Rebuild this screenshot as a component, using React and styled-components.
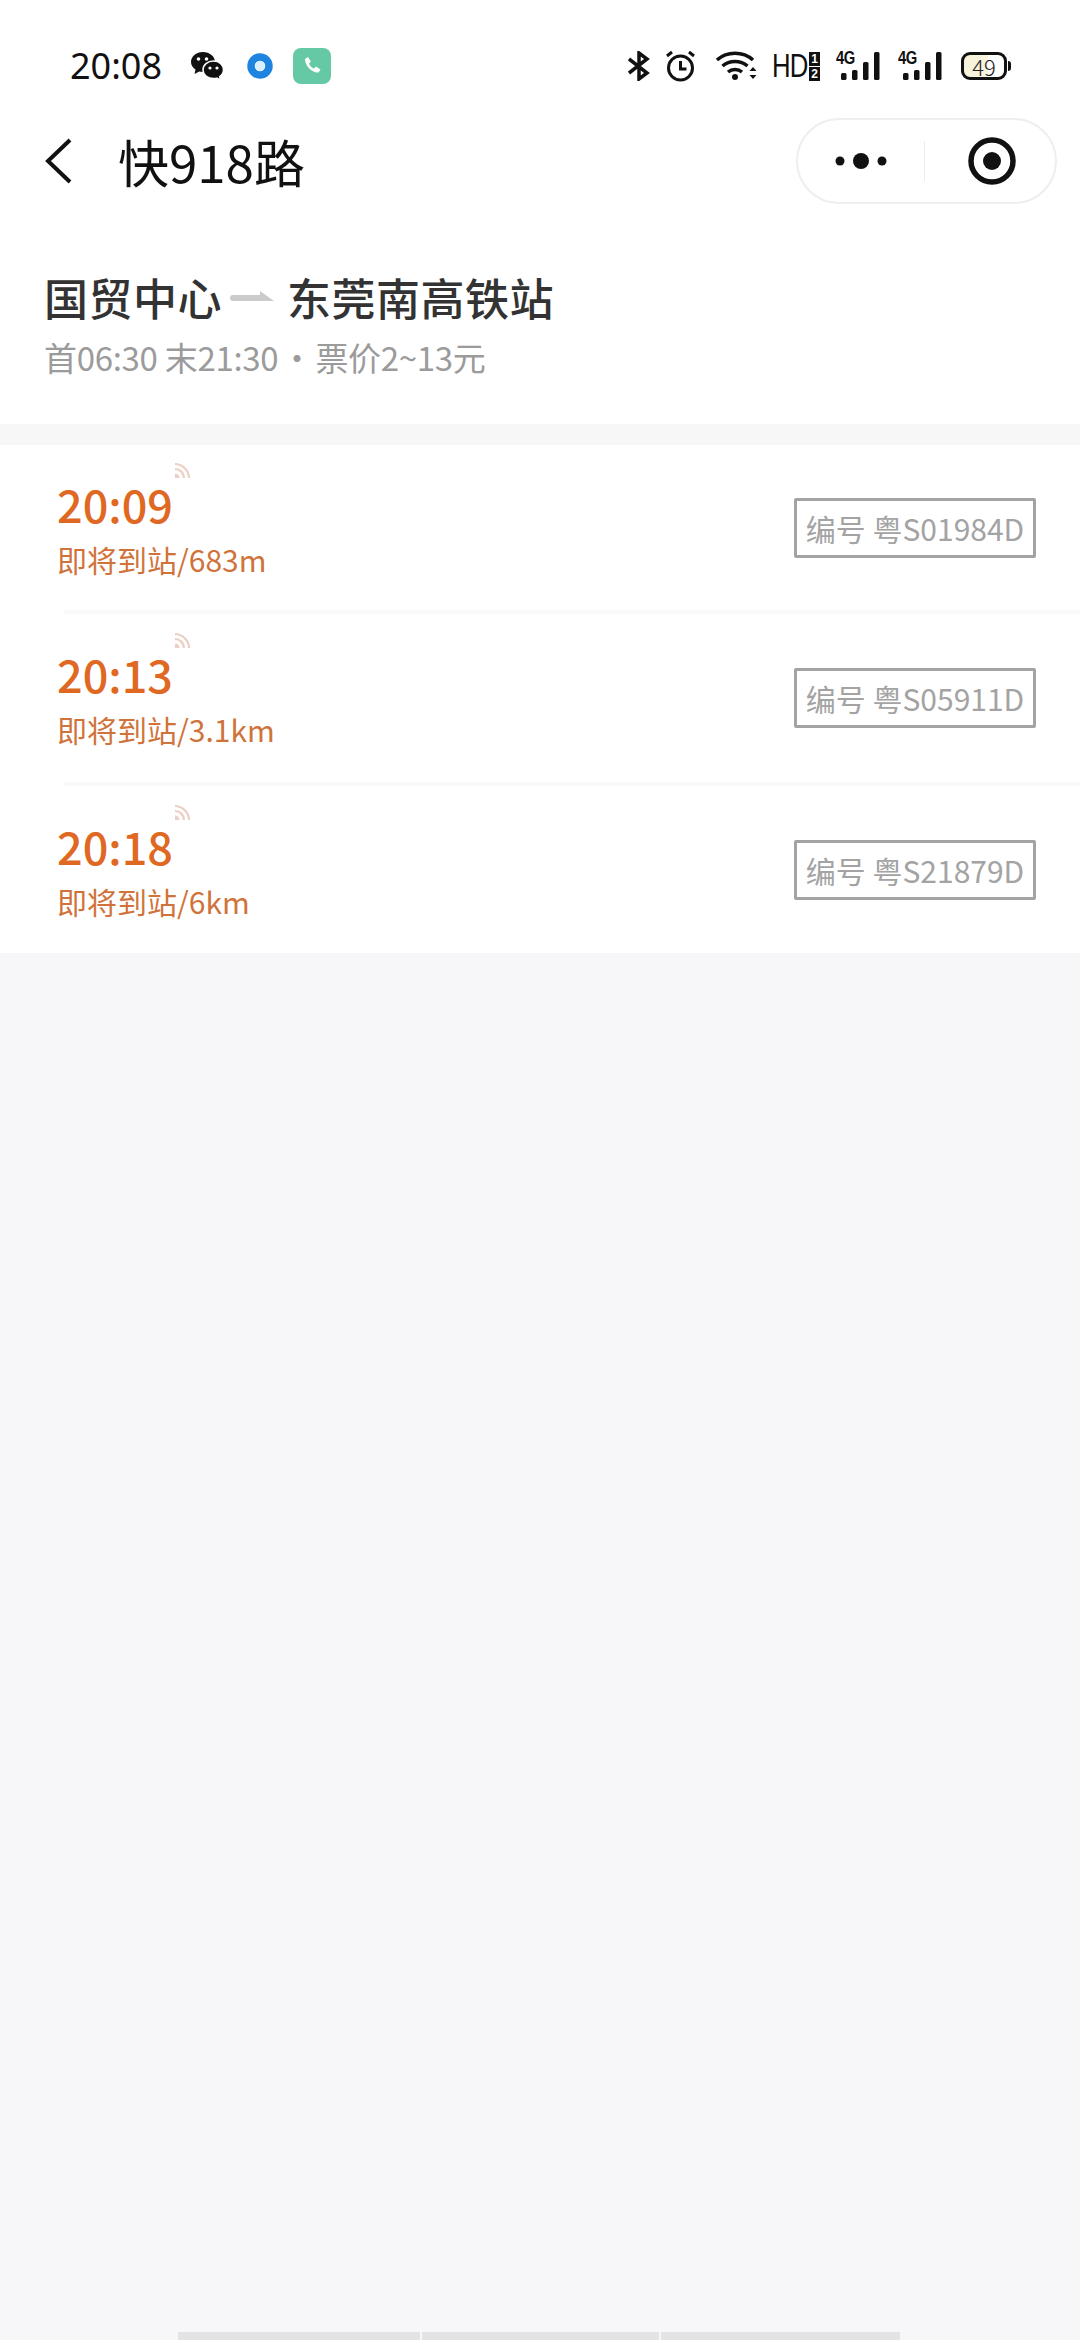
import React from 'react';
import styled, { createGlobalStyle } from 'styled-components';

const cjk = `"Noto Sans CJK SC", "Noto Sans", sans-serif`;

const GlobalStyle = createGlobalStyle`
	html, body {
		margin: 0;
		padding: 0;
		background: #f7f7f9;
		font-family: ${cjk};
	}
`;

const Page = styled.div`
	width: 1080px;
	height: 2340px;
	display: flex;
	flex-direction: column;
	overflow: hidden;
	background: #f7f7f9;
`;

const Top = styled.div`
	background: #fff;
`;

const StatusBar = styled.div`
	display: flex;
	align-items: center;
	justify-content: space-between;
	height: 36px;
	padding: 48px 69px 0 70px;
`;

const StatusGroup = styled.div`
	display: flex;
	align-items: center;
`;

const Clock = styled.span`
	font-family: "Noto Sans", sans-serif;
	font-size: 36px;
	line-height: 36px;
	color: #111;
	margin-right: 28px;
`;

const Glyph = styled.svg`
	display: block;
	flex: none;
	margin-left: ${props => props.$gap || 0}px;
`;

const HdText = styled.span`
	display: block;
	width: 37px;
	margin-left: 15px;
	font-family: "Liberation Sans", sans-serif;
	font-size: 33px;
	line-height: 36px;
	letter-spacing: -1px;
	white-space: nowrap;
	color: #111;
	transform: scaleX(0.78);
	transform-origin: left center;
`;

const SimStack = styled.div`
	display: flex;
	flex-direction: column;
	gap: 1px;
`;

const SimCell = styled.span`
	width: 11px;
	height: 14px;
	background: #111;
	color: #fff;
	font: 700 12px/14px "Liberation Sans", sans-serif;
	text-align: center;
`;

const Signal = styled.div`
	position: relative;
	width: 44px;
	height: 28px;
	margin-left: ${props => props.$gap}px;
`;

const SignalLabel = styled.span`
	position: absolute;
	left: 0;
	top: -3px;
	font: 700 18px/18px "Liberation Sans", sans-serif;
	letter-spacing: -0.5px;
	color: #111;
	transform: scaleX(0.82);
	transform-origin: left center;
`;

const Battery = styled.div`
	position: relative;
	box-sizing: border-box;
	width: 46px;
	height: 28px;
	margin: 0 4px 0 19px;
	border: 3px solid #111;
	border-radius: 9px;
	background: linear-gradient(90deg, #f8f3dc 0 58%, #fff 62%);
	color: #222;
	font-size: 22px;
	font-weight: 300;
	line-height: 22px;
	text-align: center;
	&::after {
		content: "";
		position: absolute;
		right: -7px;
		top: 6px;
		width: 3px;
		height: 10px;
		background: #111;
		border-radius: 0 3px 3px 0;
	}
`;

const NavBar = styled.div`
	display: flex;
	align-items: center;
	height: 86px;
	padding: 34px 23px 0 45px;
`;

const NavTitle = styled.h1`
	margin: 0 0 0 46px;
	flex: 1;
	font-size: 51px;
	font-weight: 400;
	line-height: 58px;
	color: #111;
`;

const Capsule = styled.div`
	display: flex;
	align-items: center;
	box-sizing: border-box;
	width: 261px;
	height: 86px;
	border: 2px solid #eee;
	border-radius: 43px;
`;

const CapsuleSide = styled.div`
	flex: 1;
	display: flex;
	align-items: center;
	justify-content: center;
	padding-left: ${props => props.$nudge || 0}px;
`;

const CapsuleLine = styled.div`
	width: 1px;
	height: 40px;
	background: #ececec;
`;

const RouteBlock = styled.div`
	padding: 62px 45px 44px 44px;
`;

const RouteLine = styled.div`
	display: flex;
	align-items: center;
	height: 62px;
	font-size: 44px;
	font-weight: 500;
	line-height: 62px;
	letter-spacing: 0.5px;
	color: #333;
`;

const RouteArrow = styled.svg`
	display: block;
	margin: 0 13px 0 8px;
	flex: none;
`;

const RouteMeta = styled.div`
	margin-top: 6px;
	font-size: 33px;
	line-height: 46px;
	letter-spacing: -0.3px;
	color: #9b9b9b;
`;

const MetaDot = styled.span`
	display: inline-block;
	width: 37px;
	text-align: center;
`;

const Band = styled.div`
	height: 21px;
	background: #f7f7f7;
`;

const List = styled.div`
	background: #fff;
`;

const Row = styled.div`
	display: flex;
	align-items: center;
	justify-content: space-between;
	box-sizing: border-box;
	height: ${props => props.$height}px;
	padding: 0 44px 0 57px;
`;

const RowText = styled.div`
	display: flex;
	flex-direction: column;
`;

const TimeWrap = styled.div`
	position: relative;
	align-self: flex-start;
	font-size: 45px;
	font-weight: 500;
	line-height: 56px;
	color: #df6823;
`;

const Live = styled.svg`
	position: absolute;
	left: 117px;
	top: -14px;
	display: block;
`;

const Eta = styled.div`
	margin-top: 6px;
	font-size: 30px;
	line-height: 42px;
	color: #d0733b;
`;

const Plate = styled.div`
	box-sizing: border-box;
	display: flex;
	align-items: center;
	justify-content: center;
	width: 242px;
	height: 60px;
	border: 3px solid #a3a3a3;
	border-radius: 2px;
	font-size: 30px;
	color: #a3a3a3;
	white-space: nowrap;
`;

const Divider = styled.div`
	height: 4px;
	margin-left: 64px;
	background: #f9f9fa;
`;

const HomeHint = styled.div`
	display: flex;
	gap: 2px;
	margin: auto 180px 0 178px;
	height: 8px;
`;

const HintPart = styled.div`
	flex: ${props => props.$grow};
	background: #e3e3e5;
`;

const WeChat = () => (
	<Glyph width="35" height="30" viewBox="0 0 35 30">
		<path d="M13 1C6 1 1 5.600 1 11c0 3.200 1.800 5.800 4.500 7.600L4.600 23l4.600-2.600c1.300.3 2.500.5 3.800.5 6.500 0 12-4.400 12-10C25 5.400 19.500 1 13 1z" fill="#111" />
		<path d="M23.500 10C17.500 10 13 14 13 18.800s4.500 8.800 10.500 8.800c1.200 0 2.300-.2 3.400-.5l3.600 2-.8-3.500c2.400-1.600 3.800-4 3.800-6.800C33.500 14 29.500 10 23.500 10z" fill="#111" stroke="#fff" strokeWidth="1.500" />
		<circle cx="8.500" cy="8" r="1.800" fill="#fff" />
		<circle cx="16.500" cy="8" r="1.800" fill="#fff" />
		<circle cx="20" cy="17" r="1.600" fill="#fff" />
		<circle cx="27" cy="17" r="1.600" fill="#fff" />
	</Glyph>
);

const BlueDot = () => (
	<Glyph $gap={22} width="26" height="26" viewBox="0 0 26 26">
		<circle cx="13" cy="13" r="9" fill="none" stroke="#1f84e0" strokeWidth="7.500" />
		<circle cx="13" cy="13" r="5" fill="#d8f0fb" />
	</Glyph>
);

const PhoneTile = () => (
	<Glyph $gap={20} width="38" height="36" viewBox="0 0 38 36">
		<rect width="38" height="36" rx="8" fill="#66c9a6" />
		<path d="M12 11l3-2 3 4.500-2 2c1 2.500 2.500 4 5 5l2-2 4.500 3-2 3c-6.500.5-13.500-6.500-13.500-13.500z" fill="#fff" />
	</Glyph>
);

const Bluetooth = () => (
	<Glyph width="22" height="30" viewBox="0 0 22 30" fill="none" stroke="#111" strokeWidth="3.500">
		<path d="M1 8l18 14-8 6V2l8 6L1 22" />
	</Glyph>
);

const Alarm = () => (
	<Glyph $gap={15} width="31" height="32" viewBox="0 0 31 32" fill="none" stroke="#111" strokeWidth="3">
		<circle cx="15.500" cy="18" r="12" />
		<path d="M15.500 11v8h6M2 6l5-4M29 6l-5-4" />
	</Glyph>
);

const Wifi = () => (
	<Glyph $gap={20} width="41" height="32" viewBox="0 0 41 32" fill="none" stroke="#111" strokeWidth="3.500">
		<path d="M1 10c10-9 26-9 36 0M6.500 16c7-6 18-6 25 0M12 22c4-3.500 10-3.500 14 0" />
		<circle cx="19" cy="27" r="3" fill="#111" stroke="none" />
		<path d="M33.500 21l3.500-4 3.500 4zM33.500 25l3.500 4 3.500-4z" fill="#111" stroke="none" />
	</Glyph>
);

const SignalBars = () => (
	<Glyph width="44" height="28" viewBox="0 0 44 28" fill="#111">
		<rect x="5" y="21" width="5.500" height="7" rx="1.500" />
		<rect x="16" y="18" width="5.500" height="10" rx="1.500" />
		<rect x="27" y="10" width="5.500" height="18" rx="1.500" />
		<rect x="38" y="0" width="5.500" height="28" rx="1.500" />
	</Glyph>
);

const SignalIcon = ({ gap }) => (
	<Signal $gap={gap}>
		<SignalBars />
		<SignalLabel>4G</SignalLabel>
	</Signal>
);

const LiveWaves = () => (
	<Live width="17" height="17" viewBox="0 0 17 17" fill="none" stroke="#eccfc2" strokeWidth="2.200">
		<path d="M1 2c7.500 0 14 6.500 14 14M1 7c5 0 9 4 9 9" />
		<path d="M1 11.500c2.500 0 4.500 2 4.500 4.500H1z" fill="#eccfc2" stroke="none" />
	</Live>
);

const arrivals = [
	{ time: '20:09', eta: '即将到站/683m', plate: '粤S01984D', height: 165 },
	{ time: '20:13', eta: '即将到站/3.1km', plate: '粤S05911D', height: 168 },
	{ time: '20:18', eta: '即将到站/6km', plate: '粤S21879D', height: 167 },
];

const App = () => (
	<Page>
		<GlobalStyle />
		<Top>
			<StatusBar>
				<StatusGroup>
					<Clock>20:08</Clock>
					<WeChat />
					<BlueDot />
					<PhoneTile />
				</StatusGroup>
				<StatusGroup>
					<Bluetooth />
					<Alarm />
					<Wifi />
					<HdText>HD</HdText>
					<SimStack>
						<SimCell>1</SimCell>
						<SimCell>2</SimCell>
					</SimStack>
					<SignalIcon gap={16} />
					<SignalIcon gap={18} />
					<Battery>49</Battery>
				</StatusGroup>
			</StatusBar>
			<NavBar>
				<svg width="27" height="46" viewBox="0 0 27 46" fill="none" stroke="#111" strokeWidth="4">
					<path d="M25 2L3 23l22 21" />
				</svg>
				<NavTitle>快918路</NavTitle>
				<Capsule>
					<CapsuleSide>
						<svg width="54" height="20" viewBox="0 0 54 20" fill="#111">
							<circle cx="6" cy="10" r="4.500" />
							<circle cx="27" cy="10" r="8" />
							<circle cx="48" cy="10" r="4.500" />
						</svg>
					</CapsuleSide>
					<CapsuleLine />
					<CapsuleSide $nudge={5}>
						<svg width="48" height="48" viewBox="0 0 48 48">
							<circle cx="24" cy="24" r="21" fill="none" stroke="#111" strokeWidth="5.500" />
							<circle cx="24" cy="24" r="9" fill="#111" />
						</svg>
					</CapsuleSide>
				</Capsule>
			</NavBar>
			<RouteBlock>
				<RouteLine>
					国贸中心
					<RouteArrow width="44" height="14" viewBox="0 0 44 14" fill="#cbcbcb">
						<path d="M3 5h27V1l14 10H3a3 3 0 0 1 0-6z" />
					</RouteArrow>
					东莞南高铁站
				</RouteLine>
				<RouteMeta>首06:30 末21:30<MetaDot>·</MetaDot>票价2~13元</RouteMeta>
			</RouteBlock>
		</Top>
		<Band />
		<List>
			{arrivals.map((bus, i) => (
				<React.Fragment key={bus.plate}>
					<Row $height={bus.height}>
						<RowText>
							<TimeWrap>
								{bus.time}
								<LiveWaves />
							</TimeWrap>
							<Eta>{bus.eta}</Eta>
						</RowText>
						<Plate>编号 {bus.plate}</Plate>
					</Row>
					{i < arrivals.length - 1 && <Divider />}
				</React.Fragment>
			))}
		</List>
		<HomeHint>
			<HintPart $grow={243} />
			<HintPart $grow={237} />
			<HintPart $grow={240} />
		</HomeHint>
	</Page>
);

export default App;
